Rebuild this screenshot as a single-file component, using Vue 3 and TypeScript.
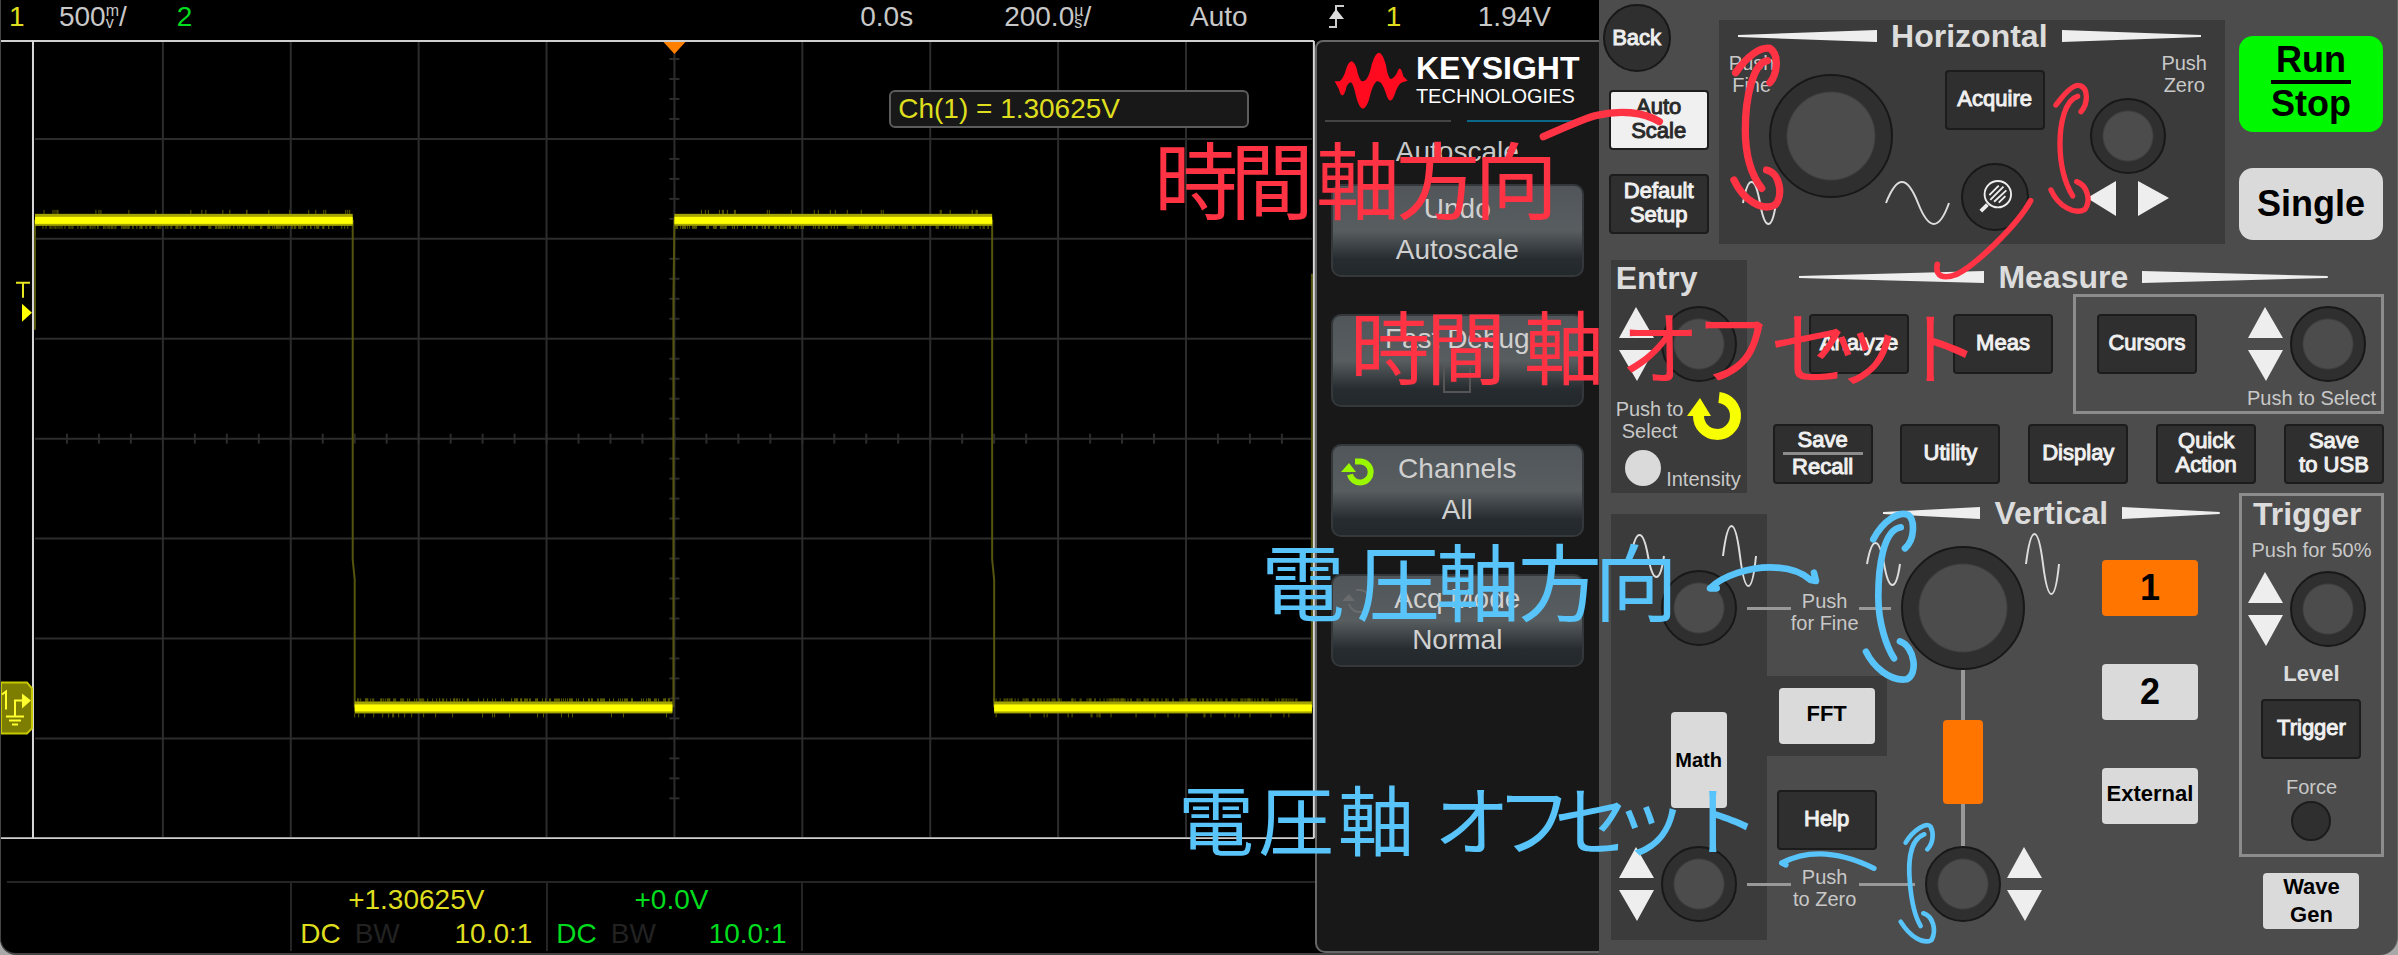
<script setup lang="ts">
import { computed, ref } from 'vue'

interface Channel {
  id: number
  offset: string
  coupling: string
  probe: string
}

const channels: Channel[] = [
  { id: 1, offset: '+1.30625V', coupling: 'DC', probe: '10.0:1' },
  { id: 2, offset: '+0.0V', coupling: 'DC', probe: '10.0:1' },
]

const fastDebug = ref(false)

const columns: number[] = [162, 290, 418, 546, 674, 802, 930, 1058, 1186]
const rows: number[] = [99, 199, 299, 399, 499, 599, 699]
const minorX: number[] = Array.from({ length: 39 }, (_, i) => 66 + i * 32)
const minorY: number[] = Array.from({ length: 38 }, (_, i) => 19 + i * 20)

interface Segment {
  x: number
  y: number
  outer: number
}

const segments: Segment[] = [
  { x: 34, y: 180, outer: 1 },
  { x: 354, y: 668, outer: -1 },
  { x: 674, y: 180, outer: 1 },
  { x: 994, y: 668, outer: -1 },
]

const noise = computed<string>(() => {
  let seed = 7
  const next = (): number => {
    seed = (seed * 1103515245 + 12345) % 2147483648
    return seed / 2147483648
  }
  let d = ''
  for (const s of segments) {
    for (let i = 0; i < 26; i++) {
      const x = s.x + Math.floor(next() * 316)
      d += `M${x} ${s.y - s.outer * 6}v${-s.outer * 4}`
    }
    for (let i = 0; i < 160; i++) {
      const x = s.x + Math.floor(next() * 316)
      d += `M${x} ${s.y + s.outer * 6}v${s.outer * 3}`
    }
  }
  return d
})
</script>

<template>
  <main class="page">
    <section class="scope">
      <header class="status">
        <span class="yellow">1</span>
        <span class="reading">500<span class="unit"><i>m</i><i>v</i></span>/</span>
        <span class="green">2</span>
        <span>0.0s</span>
        <span class="reading">200.0<span class="unit"><i>µ</i><i>s</i></span>/</span>
        <span>Auto</span>
        <svg class="edge" viewBox="0 0 18 26"><path d="M1 24h7V3h8" fill="none" stroke="#ccc" stroke-width="2" /><path d="M8 6l8 10H1z" fill="#ddd" /></svg>
        <span class="yellow">1</span>
        <span>1.94V</span>
      </header>

      <div class="display">
        <div class="trace">
          <svg class="graph" viewBox="0 0 1315 800">
            <g stroke="#2c2c2c" stroke-width="2">
              <path v-for="x in columns" :key="'c' + x" :d="`M${x} 2V798`" />
              <path v-for="y in rows" :key="'r' + y" :d="`M34 ${y}H1312`" />
              <path v-for="x in minorX" :key="'x' + x" :d="`M${x} 394v10`" />
              <path v-for="y in minorY" :key="'y' + y" :d="`M669 ${y}h10`" />
            </g>
            <g stroke="#54540e" stroke-width="2" fill="none">
              <path d="M34 180V290M352 180V520L354 540V668M673 668V260L674 180M992 180V520L994 540V668M1312 234V668" />
            </g>
            <path :d="noise" stroke="#5c5c00" stroke-width="1" />
            <g v-for="s in segments" :key="s.x">
              <rect :x="s.x" :y="s.y - 6" width="318" height="12" fill="#a5a500" />
              <rect :x="s.x" :y="s.y - 3" width="318" height="7" fill="#ffff00" />
            </g>
            <path d="M0 1H1314M0 799H1314" stroke="#d0d0d0" stroke-width="2" />
            <path d="M32 1V799M1314 1V799" stroke="#d8d8d8" stroke-width="2" />
            <path d="M663 2h22l-11 12z" fill="#ff8000" />
            <path d="M15 243h14M22 243v15" stroke="#e8e820" stroke-width="2" />
            <path d="M21 264v18l10-9z" fill="#ffff00" />
            <path d="M0 643h26l5 6v40l-5 5H0z" fill="#7d7d00" stroke="#c8c800" stroke-width="2" />
            <g fill="none" stroke="#ffff30" stroke-width="2">
              <path d="M1 655l4-3v18M14 676v-15h8M5 677h18M8 681h12M11 685h6" />
            </g>
            <path d="M21 654v15l9-8z" fill="#ffff30" />
          </svg>
          <output class="measurement">Ch(1) = 1.30625V</output>
          <footer class="channels">
            <div v-for="c in channels" :key="c.id" class="channel" :class="c.id === 1 ? 'yellow' : 'green'">
              <span class="offset">{{ c.offset }}</span>
              <span class="details"><span>{{ c.coupling }}</span><span class="bw">BW</span><span class="probe">{{ c.probe }}</span></span>
            </div>
          </footer>
        </div>

        <aside class="menu">
          <div class="brand">
            <svg class="logo" viewBox="583 150 220 178"><path fill="#ff0a1e" d="M585 240L600 240Q612 230 620 200Q635 160 650 200Q658 240 668 240Q685 240 695 190Q717 120 737 190Q745 240 755 232Q768 225 773 208Q781 190 789 225L802 238L787 243Q775 245 765 275Q750 320 737 275Q725 235 710 240Q697 250 687 295Q668 350 650 290Q640 245 633 243Q622 245 618 265Q607 300 597 262Z" /></svg>
            <div class="wordmark"><strong>KEYSIGHT</strong><span>TECHNOLOGIES</span></div>
          </div>
          <div class="tabs"><span></span><span class="active"></span></div>
          <h2 class="menu-title">Autoscale</h2>
          <button class="soft"><span>Undo</span><span>Autoscale</span></button>
          <label class="soft"><span>Fast Debug</span><input v-model="fastDebug" type="checkbox" /></label>
          <button class="soft">
            <svg class="turn" viewBox="0 0 34 28"><path d="M14 3.500h6a10.500 10.500 0 1 1-11 13" fill="none" stroke="#99f800" stroke-width="6" /><path d="M0 14L8 5l7 9z" fill="#99f800" /></svg>
            <span>Channels</span><span>All</span>
          </button>
          <button class="soft">
            <svg class="turn faint" viewBox="0 0 34 28"><path d="M15 2h4a11 11 0 1 1-11 14" fill="none" stroke="#777" stroke-width="2" /><path d="M1 13L8 6l6 7z" fill="#777" /></svg>
            <span>Acq Mode</span><span>Normal</span>
          </button>
        </aside>
      </div>
    </section>

    <section class="panel">
      <div class="band top">
        <div class="system">
          <button class="round">Back</button>
          <button class="key light">Auto<br />Scale</button>
          <button class="key default">Default<br />Setup</button>
        </div>
        <section class="horizontal">
          <header class="heading">
            <svg class="wedge" viewBox="0 0 100 12" preserveAspectRatio="none"><path d="M0 5L100 0V12L0 7z" /></svg>
            <h2>Horizontal</h2>
            <svg class="wedge" viewBox="0 0 100 12" preserveAspectRatio="none"><path d="M100 5L0 0V12L100 7z" /></svg>
          </header>
          <div class="horizontal-body">
            <div class="scale">
              <span class="hint scale-hint">Push<br />Fine</span>
              <button class="knob big" aria-label="Horizontal scale"></button>
              <svg class="sine" viewBox="0 0 35 44"><path d="M1 22C6-6 13-6 18 22S30 50 34 22" /></svg>
              <svg class="sine wide" viewBox="0 0 65 44"><path d="M1 22C12-6 22-6 33 22S54 50 64 22" /></svg>
            </div>
            <div class="acquire">
              <button class="key">Acquire</button>
              <button class="round" aria-label="Zoom">
                <svg width="34" height="34" viewBox="0 0 36 36" fill="none" stroke="#eee"><circle cx="21" cy="15" r="14" stroke-width="2" /><path d="M3 33l7-7" stroke-width="4" /><path d="M12 16L22 6M13 21L27 7M17 23L30 11M22 24l7-7" stroke-width="2" /></svg>
              </button>
            </div>
            <div class="delay">
              <span class="hint delay-hint">Push<br />Zero</span>
              <button class="knob" aria-label="Horizontal position"></button>
              <svg width="82" height="35" viewBox="0 0 82 35" fill="#eee"><path d="M29 0v35L0 17zM51 0v35l31-18z" /></svg>
            </div>
          </div>
        </section>
        <div class="run">
          <button class="cap run-stop"><span>Run</span><span class="rule"></span><span>Stop</span></button>
          <button class="cap single">Single</button>
        </div>
      </div>

      <div class="band middle">
        <section class="entry">
          <h2>Entry</h2>
          <div class="adjust">
            <svg class="updown" viewBox="0 0 35 76"><path d="M17 1l18 31H0zM0 44h35L18 75z" /></svg>
            <button class="knob" aria-label="Entry"></button>
          </div>
          <div class="select">
            <span class="hint">Push to<br />Select</span>
            <svg width="55" height="50" viewBox="0 0 55 50"><path d="M32 5.500a18.500 18.500 0 1 1-20.500 18" fill="none" stroke="#f8ff00" stroke-width="11" /><path d="M0 24L13 6l11 18z" fill="#f8ff00" /></svg>
          </div>
          <div class="intensity"><button class="lamp" aria-label="Intensity"></button><span class="hint">Intensity</span></div>
        </section>
        <section class="measure">
          <header class="heading">
            <svg class="wedge" viewBox="0 0 100 12" preserveAspectRatio="none"><path d="M0 5L100 0V12L0 7z" /></svg>
            <h2>Measure</h2>
            <svg class="wedge" viewBox="0 0 100 12" preserveAspectRatio="none"><path d="M100 5L0 0V12L100 7z" /></svg>
          </header>
          <div class="measure-row">
            <button class="key">Analyze</button>
            <button class="key">Meas</button>
            <div class="cursors">
              <div class="adjust">
                <button class="key">Cursors</button>
                <svg class="updown" viewBox="0 0 35 76"><path d="M17 1l18 31H0zM0 44h35L18 75z" /></svg>
                <button class="knob" aria-label="Cursor position"></button>
              </div>
              <span class="hint">Push to Select</span>
            </div>
          </div>
          <div class="tools">
            <button class="key">Save<span class="rule"></span>Recall</button>
            <button class="key">Utility</button>
            <button class="key">Display</button>
            <button class="key">Quick<br />Action</button>
            <button class="key">Save<br />to USB</button>
          </div>
        </section>
      </div>

      <div class="band bottom">
        <section class="math">
          <div class="waves">
            <svg class="sine" viewBox="0 0 35 44"><path d="M1 22C6-6 13-6 18 22S30 50 34 22" /></svg>
            <svg class="sine tall" viewBox="0 0 35 62"><path d="M1 31C6-9 13-9 18 31S30 71 34 31" /></svg>
          </div>
          <button class="knob" aria-label="Math scale"></button>
          <button class="cap math-key">Math</button>
          <div class="adjust">
            <svg class="updown" viewBox="0 0 35 76"><path d="M17 1l18 31H0zM0 44h35L18 75z" /></svg>
            <button class="knob" aria-label="Math position"></button>
          </div>
        </section>
        <div class="links">
          <div class="link"><i></i><span class="hint">Push<br />for Fine</span><i></i></div>
          <div class="fft"><button class="cap small">FFT</button></div>
          <button class="key help">Help</button>
          <div class="link zero"><i></i><span class="hint">Push<br />to Zero</span><i></i></div>
        </div>
        <section class="vertical">
          <header class="heading">
            <svg class="wedge" viewBox="0 0 100 12" preserveAspectRatio="none"><path d="M0 5L100 0V12L0 7z" /></svg>
            <h2>Vertical</h2>
            <svg class="wedge" viewBox="0 0 100 12" preserveAspectRatio="none"><path d="M100 5L0 0V12L100 7z" /></svg>
          </header>
          <div class="vertical-body">
            <div class="stack">
              <div class="volts">
                <svg class="sine tall" viewBox="0 0 35 62"><path d="M1 31C6 3 13 3 18 31S30 59 34 31" /></svg>
                <button class="knob big" aria-label="Vertical scale"></button>
                <svg class="sine tall" viewBox="0 0 35 62"><path d="M1 31C6-9 13-9 18 31S30 71 34 31" /></svg>
              </div>
              <i class="stem"></i>
              <span class="indicator"></span>
              <i class="stem lower"></i>
              <div class="position">
                <button class="knob" aria-label="Vertical position"></button>
                <svg class="updown" viewBox="0 0 35 76"><path d="M17 1l18 31H0zM0 44h35L18 75z" /></svg>
              </div>
            </div>
            <div class="inputs">
              <button class="cap small number on">1</button>
              <button class="cap small number">2</button>
              <button class="cap small">External</button>
            </div>
          </div>
        </section>
        <div class="side">
          <section class="trigger">
            <h2>Trigger</h2>
            <span class="hint fifty">Push for 50%</span>
            <div class="adjust">
              <svg class="updown" viewBox="0 0 35 76"><path d="M17 1l18 31H0zM0 44h35L18 75z" /></svg>
              <button class="knob" aria-label="Trigger level"></button>
            </div>
            <strong class="level">Level</strong>
            <button class="key">Trigger</button>
            <label class="hint force" for="force">Force</label>
            <button id="force" class="dot"></button>
          </section>
          <button class="cap small">Wave<br />Gen</button>
        </div>
      </div>
    </section>

    <svg class="notes" viewBox="0 0 2398 955">
      <g class="red">
        <text x="1154 1230 1316 1396 1474" y="213" font-size="84">時間軸方向</text>
        <text x="1350 1426 1524 1620 1694 1770 1824 1900" y="378" font-size="80">時間軸オフセット</text>
        <g transform="translate(1590 0) scale(.3333)">
          <path stroke-width="22" d="M-140 410C-50 370 0 350 20 346C90 330 160 335 208 365" />
          <path stroke-width="22" d="M437 218C470 170 510 140 540 145C570 165 560 225 540 248M532 182C490 190 466 290 466 390C466 480 488 530 515 565M432 540C460 600 515 635 555 615C580 590 572 520 530 510" />
          <path stroke-width="17" d="M1322 602C1280 680 1150 800 1100 823C1060 838 1035 830 1042 793" />
        </g>
        <g transform="translate(1980 0) scale(.3333)">
          <path stroke-width="16" d="M228 315C250 285 280 250 300 257C325 265 325 310 303 335M293 289C255 300 240 370 240 430C240 500 255 550 278 588M213 570C235 620 285 645 315 628C335 600 320 555 290 545" />
        </g>
      </g>
      <g class="blue">
        <text x="1261 1356 1436 1518 1594" y="615" font-size="84">電圧軸方向</text>
        <text x="1178 1258 1338 1434 1496 1554 1612 1684" y="850" font-size="76">電圧軸オフセット</text>
        <g transform="translate(1590 480) scale(.3333)">
          <path stroke-width="20" d="M380 325L360 325C400 285 480 262 540 262C600 262 640 280 662 300L678 303L672 278" />
          <path stroke-width="20" d="M850 178C880 120 930 92 955 105C975 120 975 180 945 205M932 142C880 150 865 260 865 350C865 430 890 500 912 535M828 515C850 560 900 605 950 598C985 585 975 500 930 484" />
          <path stroke-width="16" d="M588 1155L575 1149C650 1110 740 1110 852 1165" />
          <path stroke-width="14" d="M947 1088C970 1050 1010 1025 1022 1040C1032 1060 1030 1090 1012 1108M1003 1063C955 1080 955 1160 960 1210C965 1270 975 1310 992 1338M932 1325C960 1370 1000 1395 1025 1380C1040 1350 1030 1310 1000 1300" />
        </g>
      </g>
    </svg>
  </main>
</template>

<style>
body {
  margin: 0;
  background: #a8a8a8;
}
</style>

<style scoped>
* {
  box-sizing: border-box;
}

.page {
  position: relative;
  display: grid;
  grid-template-columns: 2fr 1fr;
  min-height: 100vh;
  font-family: "Liberation Sans", Arial, sans-serif;
  overflow: hidden;
}

button {
  margin: 0;
  padding: 0;
  font: inherit;
  color: inherit;
  border: 0;
  background: none;
  flex: none;
}

h2 {
  margin: 0;
  font-size: 32px;
  line-height: 36px;
  font-weight: 700;
  color: #dcdcdc;
}

/* ---------- oscilloscope display ---------- */
.scope {
  display: flex;
  flex-direction: column;
  min-width: 0;
  background: #000;
  border-left: 1px solid #444;
  border-bottom: 2px solid #444;
  border-bottom-left-radius: 16px;
  font-family: "Liberation Sans Narrow", "Liberation Sans", Arial, sans-serif;
  font-size: 28px;
  color: #c8c8c8;
}

.status {
  display: grid;
  grid-template-columns: 50fr 118fr 684fr 144fr 186fr 138fr 58fr 92fr 121fr;
  height: 40px;
  padding-left: 8px;
  line-height: 34px;
  white-space: nowrap;
}

.status > * {
  min-width: 0;
}

.reading {
  display: flex;
}

.unit {
  display: flex;
  flex-direction: column;
  justify-content: center;
  height: 34px;
  font-size: 16px;
  line-height: 12px;
}

.unit i {
  font-style: normal;
}

.edge {
  width: 18px;
  height: 26px;
  margin-top: 3px;
}

.yellow {
  color: #dede1e;
}

.green {
  color: #00dc1e;
}

.display {
  flex: 1;
  display: grid;
  grid-template-columns: 1315fr 284fr;
}

.trace {
  position: relative;
  display: flex;
  flex-direction: column;
  min-width: 0;
}

.graph {
  display: block;
  width: 100%;
}

.measurement {
  position: absolute;
  top: 50px;
  right: 5%;
  width: 360px;
  height: 38px;
  padding-left: 7px;
  line-height: 34px;
  border: 2px solid #5c5c5c;
  border-radius: 6px;
  background: #181818;
  color: #dede1e;
  white-space: nowrap;
}

.channels {
  display: grid;
  grid-template-columns: 283fr 256fr 256fr 512fr;
  margin: 42px 0 0 6px;
  border-top: 2px solid #242424;
}

.channel {
  display: flex;
  flex-direction: column;
  min-width: 0;
  height: 68px;
  padding: 0 14px 0 8px;
  border-left: 2px solid #242424;
  line-height: 34px;
}

.channel:first-child {
  grid-column: 2;
}

.channel:last-child {
  border-right: 2px solid #242424;
}

.offset {
  text-align: center;
}

.details {
  display: flex;
  gap: 14px;
}

.bw {
  color: #222;
}

.probe {
  margin-left: auto;
}

.menu {
  display: flex;
  flex-direction: column;
  padding: 9px 15px 0 14px;
  background: #181818;
  border: 2px solid #666;
  border-right: 0;
  border-radius: 8px 0 0 10px;
}

.brand {
  display: flex;
  gap: 8px;
  padding-left: 3px;
}

.logo {
  width: 74px;
  height: 60px;
}

.wordmark {
  display: flex;
  flex-direction: column;
  font-family: "Liberation Sans", Arial, sans-serif;
  font-size: 20px;
  line-height: 22px;
  color: #fff;
}

.wordmark strong {
  font-size: 32px;
  line-height: 34px;
}

.tabs {
  display: flex;
  gap: 16px;
  margin: 9px 4px 0 -6px;
}

.tabs span {
  flex: 126;
  height: 2px;
  background: #444;
}

.tabs .active {
  flex: 112;
  background: #0a6888;
}

.menu-title {
  margin: 12px 0 14px;
  font-size: 28px;
  font-weight: 400;
  text-align: center;
  color: #c8c8c8;
}

.soft {
  position: relative;
  display: flex;
  flex-direction: column;
  align-items: center;
  height: 93px;
  margin-bottom: 37px;
  padding-top: 2px;
  line-height: 42px;
  border: 2px solid #34383b;
  border-radius: 10px;
  background: linear-gradient(#51565a, #585d60 50%, #272c30 82%, #23282b);
  color: #d0d0d0;
}

.soft span {
  height: 41px;
}

.soft input {
  appearance: none;
  width: 28px;
  height: 28px;
  margin: 6px 0 0;
  border: 2px solid #555;
}

.turn {
  position: absolute;
  left: 8px;
  top: 12px;
  width: 34px;
  height: 28px;
}

.faint {
  opacity: 0.6;
}

/* ---------- front panel ---------- */
.panel {
  display: flex;
  flex-direction: column;
  min-width: 0;
  background: #4c4c4c;
  border-right: 1px solid #666;
  border-bottom-right-radius: 18px;
  font-size: 22px;
  line-height: 24px;
  color: #eee;
}

.band {
  display: grid;
}

.top {
  grid-template-columns: 106px minmax(0, 1fr) 148px;
  gap: 10px;
  padding: 0 14px 0 4px;
}

.key {
  width: 100px;
  height: 60px;
  padding-bottom: 2px;
  border: 2px solid #1c1c1c;
  border-radius: 4px;
  background: #2f2f2f;
  color: #f0f0f0;
  -webkit-text-stroke: 1px currentColor;
}

.key .rule {
  display: block;
  width: 80px;
  height: 3px;
  margin: 0 auto;
  background: #8c8c8c;
}

.light {
  background: #f0f0f0;
  color: #2a2a2a;
}

.round {
  display: flex;
  align-items: center;
  justify-content: center;
  width: 68px;
  height: 68px;
  border: 2px solid #181818;
  border-radius: 50%;
  background: #2f2f2f;
  -webkit-text-stroke: 1px currentColor;
}

.hint {
  display: block;
  font-size: 20px;
  line-height: 22px;
  text-align: center;
  white-space: nowrap;
  color: #c8c8c8;
}

.knob {
  width: 76px;
  height: 76px;
  border: 2px solid #181818;
  border-radius: 50%;
  background: radial-gradient(#4c4c4c 24px, #2f2f2f 26px);
}

.big {
  width: 124px;
  height: 124px;
  background: radial-gradient(#4c4c4c 43px, #2f2f2f 45px);
}

.updown {
  flex: none;
  width: 35px;
  height: 76px;
  fill: #eee;
}

.sine {
  width: 35px;
  height: 44px;
  fill: none;
  stroke: #ddd;
  stroke-width: 2;
}

.wide {
  width: 65px;
}

.tall {
  height: 62px;
}

.heading {
  display: flex;
  align-items: center;
  gap: 14px;
}

.wedge {
  flex: 1;
  min-width: 0;
  height: 12px;
  fill: #eee;
}

.system {
  display: flex;
  flex-direction: column;
  align-items: flex-end;
  padding-top: 4px;
}

.system .round {
  align-self: flex-start;
  margin-bottom: 18px;
}

.system .default {
  margin-top: 24px;
}

.horizontal {
  margin-top: 20px;
  background: #3b3b3b;
}

.horizontal .heading {
  height: 32px;
  padding: 0 24px 0 19px;
}

.horizontal-body {
  display: grid;
  grid-template-columns: 226px 100px 1fr;
  height: 192px;
}

.scale {
  display: grid;
  grid-template-columns: 58px 108px 1fr;
  grid-template-rows: 1fr auto;
  padding-bottom: 19px;
}

.scale-hint {
  padding-left: 8px;
}

.scale .knob {
  grid-column: 2;
  grid-row: 1 / 3;
  place-self: center;
  margin-bottom: 6px;
}

.scale .sine {
  grid-row: 2;
  grid-column: 1;
  justify-self: end;
}

.scale .wide {
  grid-column: 3;
  margin-right: 4px;
}

.acquire {
  display: flex;
  flex-direction: column;
  align-items: center;
  gap: 33px;
  padding-top: 18px;
}

.delay {
  display: flex;
  flex-direction: column;
  align-items: center;
  padding-right: 14px;
}

.delay-hint {
  align-self: flex-end;
  margin-bottom: 2px;
  padding-right: 4px;
}

.delay .knob {
  margin-bottom: 7px;
}

.run {
  display: flex;
  flex-direction: column;
  gap: 36px;
  margin-left: 4px;
  padding-top: 36px;
}

.cap {
  border-radius: 14px;
  background: #dadada;
  color: #000;
  font-size: 36px;
  line-height: 40px;
  font-weight: 700;
}

.run-stop {
  display: flex;
  flex-direction: column;
  align-items: center;
  justify-content: center;
  height: 96px;
  padding-bottom: 4px;
  background: #00f800;
}

.run-stop .rule {
  width: 80px;
  height: 4px;
  background: #000;
}

.single {
  height: 72px;
}

.small {
  width: 96px;
  height: 56px;
  padding-bottom: 4px;
  border-radius: 4px;
  font-size: 22px;
  line-height: 28px;
}

.number {
  padding-bottom: 0;
  font-size: 36px;
}

.on {
  background: #ff7500;
}

.middle {
  grid-template-columns: 136px minmax(0, 1fr);
  margin-top: 16px;
  padding: 0 13px 0 12px;
}

.entry {
  background: #3b3b3b;
}

.entry h2 {
  padding-left: 5px;
}

.adjust {
  display: flex;
  align-items: center;
  gap: 7px;
  padding-left: 8px;
}

.entry .adjust {
  margin-top: 10px;
}

.select {
  display: flex;
  align-items: flex-end;
  justify-content: space-between;
  margin-top: 10px;
  padding: 0 5px;
}

.intensity {
  display: flex;
  align-items: flex-end;
  justify-content: space-between;
  height: 40px;
  margin: 8px 0 3px;
  padding: 0 6px 0 14px;
}

.lamp {
  align-self: flex-start;
  width: 36px;
  height: 36px;
  border-radius: 50%;
  background: #dadada;
}

.measure .heading {
  height: 34px;
  padding: 0 56px 0 52px;
}

.measure-row {
  display: flex;
  justify-content: flex-end;
}

.measure-row > .key {
  margin: 20px 20px 0 24px;
}

.cursors {
  display: flex;
  flex-direction: column;
  height: 120px;
  border: 3px solid #8c8c8c;
}

.cursors .adjust {
  padding: 9px 15px 5px 21px;
}

.cursors .key {
  margin-right: 44px;
}

.cursors .hint {
  padding-right: 5px;
  text-align: right;
}

.tools {
  display: flex;
  justify-content: space-between;
  margin: 10px 0 0 26px;
}

.bottom {
  grid-template-columns: 156px 120px minmax(0, 1fr) 145px;
  padding: 0 13px 0 12px;
}

.math {
  display: flex;
  flex-direction: column;
  align-self: start;
  margin-top: 21px;
  padding: 11px 0 18px;
  background: #3b3b3b;
}

.waves {
  display: flex;
  align-items: center;
  justify-content: space-between;
  padding: 0 10px 0 19px;
}

.math > .knob {
  margin: -17px 0 66px 50px;
}

.math-key {
  width: 56px;
  height: 96px;
  margin: 0 0 38px 60px;
  border-radius: 4px;
  font-size: 20px;
}

.links {
  display: flex;
  flex-direction: column;
  align-items: center;
  padding-top: 97px;
}

.link {
  align-self: stretch;
  display: flex;
  margin: 0 -4px 42px -20px;
}

.link i {
  flex: 1;
  height: 3px;
  margin-top: 17px;
  background: #999;
}

.link i:first-child {
  flex: 0 0 44px;
}

.link .hint {
  width: 68px;
}

.zero {
  margin: 16px -28px 0 -20px;
}

.fft {
  align-self: stretch;
  padding: 12px;
  background: #3b3b3b;
}

.help {
  margin-top: 34px;
}

.vertical .heading {
  margin: 2px 19px 2px -4px;
}

.vertical-body {
  display: flex;
  justify-content: space-between;
}

.stack {
  display: flex;
  flex-direction: column;
  align-items: center;
  margin-left: -21px;
}

.volts {
  display: flex;
}

.volts .knob {
  margin-top: 13px;
}

.stem {
  width: 4px;
  height: 50px;
  background: #999;
}

.lower {
  height: 42px;
}

.indicator {
  width: 40px;
  height: 84px;
  border-radius: 4px;
  background: #ff7500;
}

.position {
  display: flex;
  gap: 6px;
  align-self: flex-start;
  padding-left: 59px;
}

.inputs {
  display: flex;
  flex-direction: column;
  gap: 48px;
  padding: 27px 41px 0 0;
}

.side {
  display: flex;
  flex-direction: column;
  align-items: center;
  gap: 16px;
}

.trigger {
  align-self: stretch;
  display: flex;
  flex-direction: column;
  align-items: center;
  padding-bottom: 13px;
  border: 3px solid #8c8c8c;
}

.trigger h2 {
  align-self: flex-start;
  padding-left: 11px;
}

.fifty {
  margin: 7px 0 10px;
}

.trigger .adjust {
  align-self: flex-start;
  padding-left: 6px;
}

.level {
  margin: 15px 0 13px;
  color: #dcdcdc;
}

.force {
  margin: 17px 0 3px;
}

.dot {
  width: 40px;
  height: 40px;
  border: 2px solid #1c1c1c;
  border-radius: 50%;
  background: #2f2f2f;
}

/* ---------- pen annotations ---------- */
.notes {
  position: absolute;
  top: 0;
  left: 0;
  width: 100%;
  pointer-events: none;
  font-family: "Noto Sans CJK JP", sans-serif;
}

.notes path {
  fill: none;
  stroke-linecap: round;
  stroke-linejoin: round;
}

.red {
  fill: #ff3344;
  stroke: #ff3344;
}

.blue {
  fill: #58c4fa;
  stroke: #58c4fa;
}

.notes text {
  stroke: none;
}
</style>
